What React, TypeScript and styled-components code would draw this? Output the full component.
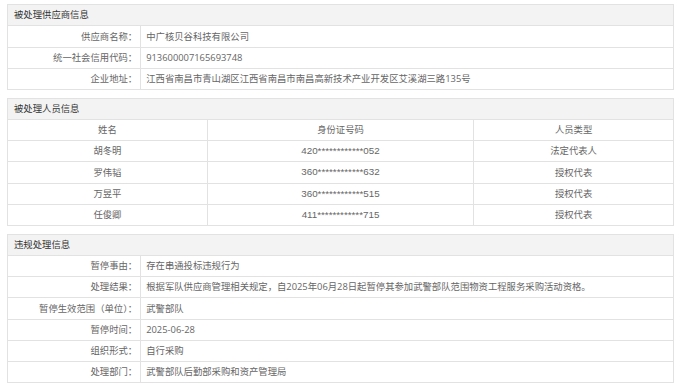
import React from "react";
import styled, { createGlobalStyle } from "styled-components";

type InfoRow = {
  label: string;
  value: string;
};

type Person = {
  name: string;
  idNo: string;
  kind: string;
};

const supplier: InfoRow[] = [
  { label: "供应商名称：", value: "中广核贝谷科技有限公司" },
  { label: "统一社会信用代码：", value: "913600007165693748" },
  { label: "企业地址：", value: "江西省南昌市青山湖区江西省南昌市南昌高新技术产业开发区艾溪湖三路135号" },
];

const people: Person[] = [
  { name: "胡冬明", idNo: "420************052", kind: "法定代表人" },
  { name: "罗伟韬", idNo: "360************632", kind: "授权代表" },
  { name: "万昱平", idNo: "360************515", kind: "授权代表" },
  { name: "任俊卿", idNo: "411************715", kind: "授权代表" },
];

const violation: InfoRow[] = [
  { label: "暂停事由：", value: "存在串通投标违规行为" },
  {
    label: "处理结果：",
    value: "根据军队供应商管理相关规定，自2025年06月28日起暂停其参加武警部队范围物资工程服务采购活动资格。",
  },
  { label: "暂停生效范围（单位）：", value: "武警部队" },
  { label: "暂停时间：", value: "2025-06-28" },
  { label: "组织形式：", value: "自行采购" },
  { label: "处理部门：", value: "武警部队后勤部采购和资产管理局" },
];

const InfoTable = ({ title, rows }: { title: string; rows: InfoRow[] }) => {
  return (
    <Section>
      <colgroup>
        <col style={{ width: "20%" }} />
        <col />
      </colgroup>
      <tbody>
        <tr>
          <Title colSpan={2}>{title}</Title>
        </tr>
        {rows.map((r) => (
          <tr key={r.label}>
            <Label>{r.label}</Label>
            <Value>{r.value}</Value>
          </tr>
        ))}
      </tbody>
    </Section>
  );
};

const App = () => {
  return (
    <Page>
      <GlobalStyle />
      <InfoTable title="被处理供应商信息" rows={supplier} />
      <Section>
        <colgroup>
          <col style={{ width: "30%" }} />
          <col style={{ width: "40%" }} />
          <col style={{ width: "30%" }} />
        </colgroup>
        <tbody>
          <tr>
            <Title colSpan={3}>被处理人员信息</Title>
          </tr>
          <tr>
            <Center>姓名</Center>
            <Center>身份证号码</Center>
            <Center>人员类型</Center>
          </tr>
          {people.map((p) => (
            <tr key={p.name}>
              <Center>{p.name}</Center>
              <Center>
                <IdText>{p.idNo}</IdText>
              </Center>
              <Center>{p.kind}</Center>
            </tr>
          ))}
        </tbody>
      </Section>
      <InfoTable title="违规处理信息" rows={violation} />
    </Page>
  );
};

export default App;

const GlobalStyle = createGlobalStyle`
body {
  margin: 0;
  background: #ffffff;
  font-family: "Open Sans", "Noto Sans CJK SC", sans-serif;
  font-size: 9.35px;
  color: #666666;
}
`;

const Page = styled.div`
width: 667px;
padding: 4px 0 0 7px;
display: flex;
flex-direction: column;
gap: 7.5px;
`;

const Section = styled.table`
width: 100%;
table-layout: fixed;
border-collapse: collapse;
border: 1px solid #e2e2e2;

td, th {
  height: 20.25px;
  padding: 0;
  border: 1px solid #e2e2e2;
  white-space: nowrap;
  line-height: 1;
}
`;

const Title = styled.th`
background: #f3f3f3;
color: #333333;
font-weight: normal;
text-align: left;
padding-left: 6px !important;
`;

const Label = styled.td`
text-align: right;
padding-right: 3px !important;
`;

const Value = styled.td`
text-align: left;
padding-left: 5px !important;
`;

const Center = styled.td`
text-align: center;
`;

const IdText = styled.span`
font-family: "Liberation Sans", sans-serif;
font-size: 9.8px;
`;
